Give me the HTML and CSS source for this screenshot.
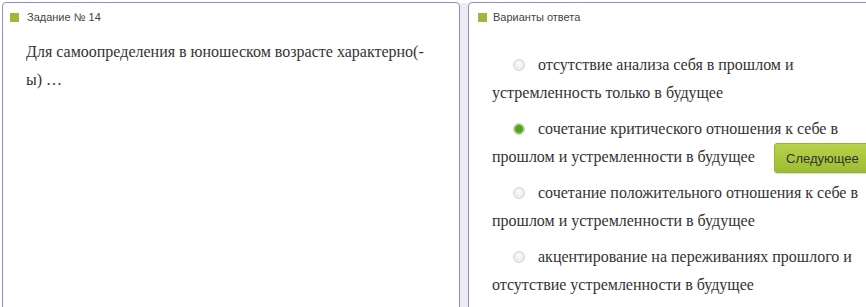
FILE: index.html
```html
<!DOCTYPE html>
<html lang="ru">
  <head>
    <meta charset="UTF-8" />
    <meta name="viewport" content="width=device-width, initial-scale=1" />
    <title>Тестирование</title>
    <link rel="stylesheet" href="styles.css">
  </head>
  <body>
    <div class="test-row">
      <!-- Вопрос -->
      <section class="panel panel-question">
        <div class="panel-head"><span class="panel-mark"></span>Задание № 14</div>
        <p class="question-text">Для самоопределения в юношеском возрасте характерно(-ы) …</p>
      </section>

      <div class="panel-gap"></div>

      <!-- Варианты -->
      <section class="panel panel-answers">
        <div class="panel-head"><span class="panel-mark"></span>Варианты ответа</div>
        <ul class="answers">
          <li><span class="radio"></span>отсутствие анализа себя в прошлом и устремленность только в будущее</li>
          <li><span class="radio checked"></span>сочетание критического отношения к себе в прошлом и устремленности в будущее</li>
          <li><span class="radio"></span>сочетание положительного отношения к себе в прошлом и устремленности в будущее</li>
          <li><span class="radio"></span>акцентирование на переживаниях прошлого и отсутствие устремленности в будущее</li>
        </ul>
        <button type="button" class="next-btn">Следующее</button>
      </section>
    </div>
  </body>
</html>
```

FILE: styles.css
```css
body {
  margin: 0;
  background: #fff;
  overflow: hidden;
  font-family: "Liberation Serif", "Times New Roman", serif;
  color: #333;
}

/* Ряд з панелями */
.test-row {
  display: flex;
  align-items: flex-start;
  padding: 2px 0 0 2px;
}

.panel {
  border: 1px solid #8e8ec6;
  border-radius: 4px;
  background: #fff;
  height: 340px;
  box-sizing: border-box;
}
.panel-question {
  width: 458px;
  flex: none;
}
.panel-gap {
  width: 8px;
  height: 340px;
  margin-top: 1px;
  flex: none;
  background: #ececf6;
}
.panel-answers {
  width: 460px;
  flex: none;
  position: relative;
}

/* Заголовок панелі */
.panel-head {
  display: flex;
  align-items: center;
  padding: 8px 0 0 7px;
  height: 12px;
  font-family: "Liberation Sans", Arial, sans-serif;
  font-size: 11px;
  color: #444;
}
.panel-answers .panel-head {
  padding-left: 9px;
}
.panel-mark {
  width: 9px;
  height: 9px;
  background: #9bba3a;
  margin-right: 8px;
}
.panel-answers .panel-mark {
  margin-right: 6px;
}

/* Текст питання */
.question-text {
  margin: 15px 0 0;
  padding: 0 25px 0 23px;
  font-size: 16px;
  line-height: 28px;
}

/* Варіанти */
.answers {
  list-style: none;
  margin: 28px 0 0;
  padding: 0 0 0 23px;
  width: 400px;
}
.answers li {
  font-size: 16px;
  line-height: 28px;
  text-indent: 21px;
  margin-bottom: 8px;
}
.radio {
  display: inline-block;
  width: 12px;
  height: 12px;
  margin-right: 13px;
  border-radius: 50%;
  box-sizing: border-box;
  border: 1px solid #d4d4d4;
  background: radial-gradient(circle at 50% 40%, #fafafa 0%, #e6e6e6 100%);
  vertical-align: -1px;
}
.radio.checked {
  border: 1px solid #b9dc9a;
  background: radial-gradient(circle, #4e9e1e 0%, #5aa62a 55%, #cfe8b8 70%, #eef7e6 100%);
}

/* Кнопка Наступне */
.next-btn {
  position: absolute;
  left: 305px;
  top: 140px;
  height: 30px;
  padding: 0 11px 0 11px;
  border: 1px solid #93b52f;
  border-radius: 3px;
  background: linear-gradient(#b8d24a, #9cbd33);
  color: #333;
  font-family: "Liberation Sans", Arial, sans-serif;
  font-size: 13px;
  box-shadow: 0 1px 1px rgba(0, 0, 0, 0.15);
  cursor: pointer;
}
```
